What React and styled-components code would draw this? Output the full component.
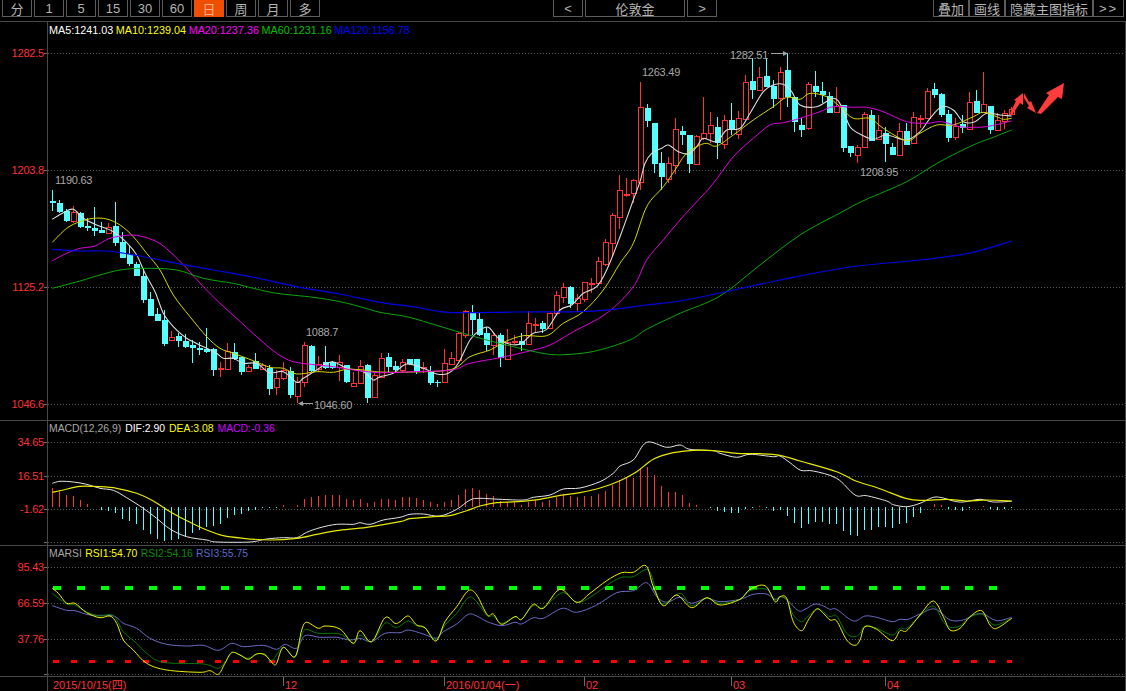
import React from 'react';
import styled, { createGlobalStyle } from 'styled-components';

const GlobalStyle = createGlobalStyle`
  html, body {
    margin: 0;
    padding: 0;
    background: #000;
    overflow: hidden;
  }
`;

const colors = {
  up: '#ff3232',
  down: '#54ffff',
  grid: '#5a5a5a',
  rule: '#484848',
  label: '#a8a8a8',
};

// [isUp, bodyTop, bodyBottom, high, low], one row per trading day
const candles = [
  [0,201,203,190,211],[0,203,212,200,213],[0,211,221,209,222],[1,212,221,206,223],[0,213,227,212,228],
  [0,226,228,218,231],[0,228,231,207,236],[0,230,233,222,233],[1,227,233,223,234],[0,226,243,202,246],
  [0,242,258,232,258],[0,254,264,245,266],[0,264,276,262,276],[0,276,300,268,303],[0,299,316,292,316],
  [0,314,321,308,321],[0,320,344,310,346],[1,337,340,331,341],[0,336,341,333,347],[0,341,347,334,348],
  [0,345,348,340,363],[0,348,350,342,355],[0,349,352,328,353],[0,349,370,348,376],[1,368,369,362,377],
  [1,351,369,343,370],[0,352,359,343,360],[0,357,372,357,375],[1,367,371,365,372],[0,361,369,353,369],
  [1,365,369,363,370],[0,368,389,365,395],[1,378,387,370,395],[1,370,378,362,380],[0,371,395,367,398],
  [1,382,396,377,403],[1,345,382,342,387],[0,346,371,345,372],[1,364,369,356,372],[0,362,368,346,369],
  [0,362,368,361,369],[1,362,367,355,381],[0,365,382,365,383],[1,383,386,372,386],[1,366,383,360,384],
  [0,365,398,364,403],[1,375,397,373,398],[1,358,377,353,378],[0,357,367,353,372],[0,366,370,361,373],
  [1,362,370,359,372],[0,359,364,359,365],[0,359,372,359,374],[1,367,368,362,373],[0,371,383,366,385],
  [0,382,383,380,387],[1,363,382,349,382],[1,358,364,352,364],[1,333,360,332,361],[1,311,335,310,338],
  [0,312,320,305,335],[0,319,335,312,336],[0,333,345,327,351],[1,335,345,333,355],[0,335,358,333,367],
  [1,342,359,329,360],[1,341,342,335,344],[0,341,345,333,351],[1,323,344,311,345],[1,324,325,318,333],
  [0,323,329,321,333],[1,313,328,313,329],[1,295,313,291,314],[1,287,297,283,303],[0,287,304,286,308],
  [1,298,303,294,312],[1,282,299,282,302],[1,283,284,278,293],[1,261,283,257,285],[1,242,264,239,266],
  [1,215,243,213,257],[1,190,217,175,229],[1,194,195,178,197],[1,180,193,179,203],[1,107,182,82,190],
  [0,108,121,104,127],[0,123,164,123,173],[0,163,177,152,190],[1,163,179,157,183],[1,129,165,118,174],
  [0,131,135,126,145],[0,135,164,135,173],[1,136,164,135,165],[1,133,138,97,140],[1,125,133,112,143],
  [0,127,143,117,159],[1,120,144,115,149],[0,120,130,103,135],[1,118,134,111,139],[1,82,119,75,120],
  [0,81,90,58,99],[1,77,90,67,91],[0,76,87,58,87],[0,86,99,80,108],[1,72,98,67,120],
  [0,70,97,53,107],[0,97,122,97,132],[0,125,130,118,137],[1,84,128,82,130],[0,86,92,71,97],
  [0,91,95,82,103],[0,96,113,92,113],[1,106,112,87,112],[0,105,148,105,152],[0,146,153,146,157],
  [1,147,155,145,163],[1,114,147,112,147],[0,115,141,110,141],[1,130,139,115,140],[0,133,144,127,162],
  [0,147,155,143,155],[1,131,155,123,155],[0,131,145,123,145],[1,117,143,112,143],[1,118,119,115,128],
  [1,91,118,88,119],[0,89,95,83,98],[0,94,115,93,117],[0,114,138,110,142],[1,126,137,118,140],
  [0,124,128,115,133],[1,102,129,92,130],[0,101,113,90,113],[1,104,112,72,113],[0,106,130,106,134],
  [1,120,130,113,131],[1,113,121,110,129],[1,109,114,107,114],
];

// MACD histogram height per day, positive draws up in red
const macdBars = [
  19,16,12.5,11,7,3,0,-3,-3.5,-6,-12,-14,-17,-23,-27,-32,-34,-33,-32,-30,
  -26,-23,-20,-19,-17,-11,-8,-7,-4,-2.5,-1,-1,-1,2,0,2,8,10,11,12,
  12,12,8,7,8,4,5,8,8,7,10,10,9,7,5,3,5,7,12,18,
  19,17,13,11,6,5,5,2,5,7,5,7,10,13,11,10,11,11,13,16,
  22,27,30,29,39,40,32,21,15,15,12,4,2,0,-1,-4,-4.5,-6,-6,-2,
  -1,1,-1,-4,-3,-9,-15.5,-21,-17,-15,-15,-17,-17,-24,-28,-29,-23,-23,-20,-20,
  -21,-17,-16,-10,-6,0,3.5,2.5,-2,-3,-4,-1,0,1,-2,-3,-2,-1,
];

// the curve points were read off 3x crops, so each run keeps its crop origin
const crop = (ox, oy, flat) => {
  const pts = [];
  for (let i = 0; i < flat.length; i += 2) {
    pts.push([ox + flat[i] / 3, oy + flat[i + 1] / 3]);
  }
  return pts;
};

const smooth = (pts) => {
  let d = `M${pts[0][0].toFixed(1)} ${pts[0][1].toFixed(1)}`;
  for (let i = 0; i < pts.length - 1; i++) {
    const p0 = pts[i - 1] || pts[i];
    const p1 = pts[i];
    const p2 = pts[i + 1];
    const p3 = pts[i + 2] || p2;
    const c1x = p1[0] + (p2[0] - p0[0]) / 6;
    const c1y = p1[1] + (p2[1] - p0[1]) / 6;
    const c2x = p2[0] - (p3[0] - p1[0]) / 6;
    const c2y = p2[1] - (p3[1] - p1[1]) / 6;
    d += `C${c1x.toFixed(1)} ${c1y.toFixed(1)} ${c2x.toFixed(1)} ${c2y.toFixed(1)} ${p2[0].toFixed(1)} ${p2[1].toFixed(1)}`;
  }
  return d;
};

const ma5 = [
  ...crop(0, 170, [157,148,190,128,220,118,250,145,290,165,340,185,380,218,410,255,435,310,465,365,490,430,520,470,560,505,620,535,650,550,670,565,700,565,730,580,770,580,808,608,850,605,890,637,910,625,950,600,995,575,1040,595,1090,605,1120,630]),
  ...crop(380, 170, [0,620,40,610,80,582,130,595,170,612,205,610,235,580,270,510,300,480,325,472,350,500,380,520,420,522,460,490,500,478,540,420,575,405,610,370,650,350,680,300,720,200,760,90]),
  ...crop(620, 50, [60,395,75,340,95,310,125,295,145,285,175,305,205,312,230,290,250,265,290,275,320,240,360,235,390,190,430,125,460,105,490,103,515,125,540,165,590,170,640,145,665,170,690,230,725,255,760,268,800,255,860,270,900,245,930,205,965,170,1000,180,1030,215,1065,215,1100,190,1140,195,1175,198]),
];
const ma10 = [
  ...crop(0, 170, [157,217,200,175,240,155,280,145,320,147,360,165,400,200,440,250,480,300,520,375,570,440,620,500,660,535,700,550,760,572,810,592,850,595,890,612,950,605,1000,607,1040,598,1090,600]),
  ...crop(380, 170, [0,606,100,606,215,598,270,560,330,540,375,515,430,497,500,497,550,460,610,425,670,360,720,280,760,220,800,110]),
  ...crop(620, 50, [130,410,165,360,195,315,230,290,260,280,290,288,340,255,400,210,460,170,500,142,540,148,570,130,620,140,660,170,700,205,750,205,790,235,860,272,900,250,950,225,1000,225,1060,200,1090,187,1130,200,1150,208,1175,205]),
];
const ma20 = [
  ...crop(0, 170, [157,272,200,250,240,235,285,228,330,205,380,196,420,198,470,215,510,245,560,295,610,350,660,400,710,445,770,500,830,550,880,575,950,585,1000,590,1060,600]),
  ...crop(380, 170, [0,608,100,605,215,600,270,580,360,563,440,545,510,525,580,485,680,430,760,350,800,270,850,210,900,150]),
  ...crop(620, 50, [235,450,280,400,340,320,400,265,450,225,490,218,540,205,600,185,640,170,700,172,740,172,790,185,860,215,920,220,965,215,1020,230,1070,232,1110,228,1175,213]),
];
const ma60 = [
  ...crop(0, 170, [157,355,240,333,300,315,360,300,430,295,530,300,610,325,700,340,760,355,830,370,940,382,1020,395,1080,410]),
  ...crop(380, 170, [0,427,80,440,150,460,250,490,320,510,400,530,500,552,570,553,650,542,750,510,800,478,900,430]),
  [720,296],[760,265],[800,235],[840,213],
  ...crop(620, 50, [735,450,860,395,960,335,1060,285,1120,262,1175,240]),
];
const ma120 = [
  ...crop(0, 170, [157,238,240,243,320,243,420,258,530,280,640,300,760,322,900,352,1020,372]),
  ...crop(380, 170, [0,397,100,410,180,425,250,428,400,426,600,425,700,418,800,405,900,393]),
  [720,293],[780,280],[850,267],[920,260],[970,253],[1012,241],
];

const dif = [
  ...crop(0, 415, [157,205,180,199,220,201,260,208,300,220,340,226,380,248,430,280,470,310,510,342,560,365,620,375,650,381,750,381,800,372,850,368,890,368,920,352,960,338,1010,328,1060,328,1080,323,1110,328,1150,315]),
  ...crop(400, 420, [0,292,30,283,70,282,120,288,170,268,210,240,240,235,300,238,370,240,400,232,450,225,490,207,540,204,600,185,640,160,660,138,700,120,740,67,800,82,840,75,870,88,940,92,960,100,1010,112,1050,103,1120,110]),
  ...crop(780, 420, [0,108,30,128,62,151,100,153,170,175,225,225,260,227,320,243,340,254,380,260,420,250,460,232,490,234,520,243,550,246,600,238,640,246,695,244]),
];
const dea = [
  ...crop(0, 415, [157,232,190,225,240,214,300,215,350,220,410,235,460,258,510,290,570,322,620,345,670,362,730,370,810,375,890,370,950,358,1010,347,1100,337]),
  ...crop(400, 420, [0,305,30,296,100,290,150,287,200,272,240,258,290,248,350,245,420,238,480,226,540,218,600,204,660,182,710,155,760,118,820,98,880,91,940,92,1010,100,1080,101]),
  ...crop(780, 420, [0,106,60,123,170,155,225,182,300,206,380,236,430,241,500,238,560,243,620,240,695,243]),
];

const rsi1 = [
  ...crop(0, 540, [157,145,175,160,200,190,225,190,260,218,300,233,330,228,350,250,370,300,400,330,440,370,500,390,600,397,630,392,655,403,675,370,695,338,720,345,745,358,770,342,795,345,820,372,830,370,850,322,885,350,905,270,920,247,955,265,975,258,1020,267,1060,310,1080,272,1115,305,1155,233,1185,250]),
  ...crop(400, 540, [0,245,25,228,50,255,75,263,108,303,135,245,170,200,205,152,230,165,262,225,280,222,305,253,345,230,365,238,400,193,430,205,480,148,530,187,570,160,620,122,665,98,700,97,738,77,760,140,790,197,830,165,875,203,920,173,960,195,1020,178,1050,148,1095,137,1125,185]),
  ...crop(780, 540, [0,170,20,175,40,245,65,272,85,240,110,207,130,220,150,240,170,243,200,300,225,316,240,300,255,260,290,268,337,302,360,272,380,272,420,225,460,183,490,230,510,270,540,265,570,230,605,212,630,255,650,265,695,235]),
];
const rsi2 = [
  ...crop(0, 540, [157,160,200,192,225,195,260,216,300,228,340,226,370,275,410,310,440,340,490,367,610,372,655,385,675,365,695,337,720,345,745,355,770,342,795,342,815,362,850,322,885,352,905,285,920,268,955,280,1020,282,1060,310,1080,285,1115,305,1155,250,1185,262]),
  ...crop(400, 540, [0,258,25,243,50,257,75,265,108,298,135,255,170,220,205,173,230,185,262,228,280,228,305,250,345,230,365,237,400,197,430,203,487,158,530,187,570,172,630,130,665,112,700,110,745,90,770,160,790,192,840,160,875,197,920,175,960,190,1020,178,1050,152,1100,148,1125,180]),
  ...crop(780, 540, [0,170,20,180,40,225,65,245,85,228,110,207,130,215,150,230,170,228,200,280,225,290,240,280,255,258,290,265,337,285,360,265,380,265,420,228,460,198,490,245,510,262,540,258,570,232,605,222,630,247,650,255,695,235]),
];
const rsi3 = [
  ...crop(0, 540, [157,197,200,211,225,212,270,225,340,228,370,250,410,265,450,295,500,313,560,318,610,316,655,331,695,310,730,320,790,316,830,328,855,313,890,325,915,287,960,292,1010,292,1050,300,1080,295,1115,305,1155,280]),
  ...crop(400, 540, [0,278,25,270,70,282,108,295,130,275,170,252,205,223,230,228,262,245,305,257,345,247,365,252,400,233,430,235,487,205,530,217,590,195,650,158,700,152,740,128,770,170,800,187,840,172,875,190,920,175,960,185,1020,178,1060,163,1100,162,1125,178]),
  ...crop(780, 540, [0,170,20,178,55,212,75,208,105,192,130,198,150,208,170,208,220,243,255,228,290,232,337,245,360,238,385,238,420,222,465,207,510,240,550,240,580,225,610,222,650,242,695,232]),
];

const Page = styled.div`
  position: relative;
  width: 1126px;
  height: 691px;
  background: #000;
  overflow: hidden;
  font-family: "Liberation Sans", "Noto Sans CJK SC", sans-serif;
`;

const Toolbar = styled.div`
  display: flex;
  height: 21px;
  padding-left: 2px;
  border-bottom: 1px solid ${colors.rule};
  box-sizing: content-box;
`;

const ButtonGroup = styled.div`
  display: flex;
  gap: ${(p) => p.$gap || 0}px;
  margin-left: ${(p) => p.$offset || 0}px;
`;

const ToolButton = styled.div`
  width: ${(p) => p.$width || 30}px;
  height: 18px;
  margin-top: -1px;
  box-sizing: border-box;
  border: 1px solid #5c5c5c;
  display: flex;
  align-items: center;
  justify-content: center;
  font-size: 13px;
  color: ${(p) => (p.$active ? '#f0b090' : '#b4b4b4')};
  background: ${(p) => (p.$active ? '#f04e00' : '#000')};
  border-color: ${(p) => (p.$active ? '#f04e00' : '#5c5c5c')};
  letter-spacing: ${(p) => p.$spacing || 0}px;
  white-space: nowrap;
`;

const Panel = styled.div`
  position: absolute;
  left: 0;
  top: ${(p) => p.$top}px;
  width: 1126px;
  height: ${(p) => p.$height}px;
  border-bottom: 1px solid ${colors.rule};
`;

const PanelChart = styled.svg`
  position: absolute;
  left: 0;
  top: 0;
  display: block;
`;

const AxisLine = styled.div`
  position: absolute;
  top: 21px;
  bottom: 0;
  left: ${(p) => p.$left}px;
  width: 1px;
  background: ${colors.rule};
`;

const AxisLabel = styled.div`
  position: absolute;
  left: 0;
  width: 44px;
  top: ${(p) => p.$y - 7}px;
  height: 14px;
  line-height: 14px;
  text-align: right;
  font-size: 11px;
  letter-spacing: -0.2px;
  color: ${colors.up};
`;

const Legend = styled.div`
  position: absolute;
  left: 49px;
  top: ${(p) => p.$y - 7}px;
  height: 14px;
  line-height: 14px;
  display: flex;
  gap: ${(p) => p.$gap}px;
  font-size: ${(p) => p.$size}px;
  white-space: nowrap;
`;

const LegendItem = styled.span`
  color: ${(p) => p.$color};
`;

const PriceNote = styled.div`
  position: absolute;
  left: ${(p) => p.$x}px;
  top: ${(p) => p.$y - 7}px;
  height: 14px;
  line-height: 14px;
  font-size: 11px;
  letter-spacing: -0.25px;
  color: ${colors.label};
`;

const TimeAxis = styled.div`
  position: absolute;
  left: 0;
  top: 677px;
  width: 1126px;
  height: 14px;
`;

const TimeLabel = styled.div`
  position: absolute;
  left: ${(p) => p.$x}px;
  top: 0;
  padding-left: 1px;
  border-left: 1px solid ${(p) => (p.$tick ? '#6a6a6a' : 'transparent')};
  height: 9px;
  line-height: 17px;
  font-size: 11px;
  color: ${colors.up};
  white-space: nowrap;
`;

const Grid = ({ ys }) => (
  <g shapeRendering="crispEdges">
    {ys.map((y) => (
      <g key={y}>
        <line x1="44" x2="48" y1={y + 0.5} y2={y + 0.5} stroke="#707070" />
        <line x1="48" x2="1125" y1={y + 0.5} y2={y + 0.5} stroke={colors.grid} strokeDasharray="1 2" />
      </g>
    ))}
  </g>
);

const Candles = () => (
  <g shapeRendering="crispEdges">
    {candles.map(([isUp, top, bottom, high, low], i) => {
      const x = 52 + i * 7;
      const color = isUp ? colors.up : colors.down;
      return (
        <g key={i}>
          <rect x={x} y={high} width="1" height={low - high} fill={color} />
          {isUp ? (
            <rect x={x - 1.5} y={top + 0.5} width="5" height={Math.max(bottom - top, 1)} fill="#000" stroke={color} />
          ) : (
            <rect x={x - 2} y={top} width="6" height={Math.max(bottom - top, 1)} fill={color} />
          )}
        </g>
      );
    })}
  </g>
);

const Curve = ({ pts, color, width = 1 }) => (
  <path d={smooth(pts)} fill="none" stroke={color} strokeWidth={width} strokeLinejoin="round" />
);

const PriceMarks = () => (
  <g>
    <g stroke="#a0a0a0" fill="#a0a0a0">
      <line x1="771" x2="784" y1="53.5" y2="53.5" />
      <polygon points="788,53.5 783,51 783,56" stroke="none" />
      <line x1="302" x2="313" y1="403.5" y2="403.5" />
      <polygon points="298,403.5 303,401 303,406" stroke="none" />
    </g>
    <g fill="#ff3b3b">
      <polygon points="1010,113 1016,101 1014,100 1023,93 1023,105 1020,103 1012,115" />
      <polygon points="1024,93 1029,102 1031,101 1036,113 1027,108 1029,106 1024,98" />
      <polygon points="1037,113 1049,95 1046,93 1064,83 1062,99 1058,97 1041,114" />
    </g>
  </g>
);

const PricePanel = () => (
  <Panel $top={22} $height={398}>
    <PanelChart width="1126" height="398" viewBox="0 22 1126 398">
      <Grid ys={[53, 170, 287, 404]} />
      <Candles />
      <Curve pts={ma5} color="#dcdcdc" width={1.1} />
      <Curve pts={ma10} color="#d8d800" />
      <Curve pts={ma20} color="#e000e0" />
      <Curve pts={ma60} color="#08a808" />
      <Curve pts={ma120} color="#0000e6" width={1.2} />
      <PriceMarks />
    </PanelChart>
    <AxisLabel $y={31}>1282.5</AxisLabel>
    <AxisLabel $y={148}>1203.8</AxisLabel>
    <AxisLabel $y={265}>1125.2</AxisLabel>
    <AxisLabel $y={382}>1046.6</AxisLabel>
    <Legend $y={8} $gap={2.6} $size={10.8}>
      <LegendItem $color="#fff">MA5:1241.03</LegendItem>
      <LegendItem $color="#ffff00">MA10:1239.04</LegendItem>
      <LegendItem $color="#ff00ff">MA20:1237.36</LegendItem>
      <LegendItem $color="#00c000">MA60:1231.16</LegendItem>
      <LegendItem $color="#0000ff">MA120:1156.78</LegendItem>
    </Legend>
    <PriceNote $x={55} $y={158}>1190.63</PriceNote>
    <PriceNote $x={642} $y={50}>1263.49</PriceNote>
    <PriceNote $x={730} $y={33}>1282.51</PriceNote>
    <PriceNote $x={306} $y={310}>1088.7</PriceNote>
    <PriceNote $x={314} $y={383}>1046.60</PriceNote>
    <PriceNote $x={860} $y={150}>1208.95</PriceNote>
  </Panel>
);

const MacdPanel = () => (
  <Panel $top={421} $height={124}>
    <PanelChart width="1126" height="124" viewBox="0 421 1126 124">
      <Grid ys={[442, 476, 509, 542]} />
      <g shapeRendering="crispEdges">
        {macdBars.map((h, i) =>
          h === 0 ? null : (
            <rect
              key={i}
              x={52 + i * 7}
              y={h > 0 ? 507 - h : 507}
              width="1"
              height={Math.abs(h)}
              fill={h > 0 ? colors.up : colors.down}
            />
          ),
        )}
      </g>
      <Curve pts={dif} color="#e4e4e4" />
      <Curve pts={dea} color="#e8e800" width={1.2} />
    </PanelChart>
    <AxisLabel $y={21}>34.65</AxisLabel>
    <AxisLabel $y={55}>16.51</AxisLabel>
    <AxisLabel $y={88}>-1.62</AxisLabel>
    <Legend $y={8} $gap={4} $size={10.4}>
      <LegendItem $color={colors.label}>MACD(12,26,9)</LegendItem>
      <LegendItem $color="#fff">DIF:2.90</LegendItem>
      <LegendItem $color="#ffff00">DEA:3.08</LegendItem>
      <LegendItem $color="#d000ff">MACD:-0.36</LegendItem>
    </Legend>
  </Panel>
);

const RsiPanel = () => (
  <Panel $top={546} $height={130}>
    <PanelChart width="1126" height="130" viewBox="0 546 1126 130">
      <Grid ys={[567, 603, 639, 674]} />
      <line x1="52.5" x2="997" y1="587.5" y2="587.5" stroke="#00ff00" strokeWidth="4" strokeDasharray="8 16" shapeRendering="crispEdges" />
      <line x1="52.5" x2="1012" y1="661.5" y2="661.5" stroke="#ff0000" strokeWidth="3" strokeDasharray="6 12" shapeRendering="crispEdges" />
      <Curve pts={rsi3} color="#6a6ac8" />
      <Curve pts={rsi2} color="#0a780a" />
      <Curve pts={rsi1} color="#f0f000" />
    </PanelChart>
    <AxisLabel $y={21}>95.43</AxisLabel>
    <AxisLabel $y={57}>66.59</AxisLabel>
    <AxisLabel $y={93}>37.76</AxisLabel>
    <Legend $y={8} $gap={3.4} $size={10.4}>
      <LegendItem $color={colors.label}>MARSI</LegendItem>
      <LegendItem $color="#ffff00">RSI1:54.70</LegendItem>
      <LegendItem $color="#0a8a0a">RSI2:54.16</LegendItem>
      <LegendItem $color="#5a6ac8">RSI3:55.75</LegendItem>
    </Legend>
  </Panel>
);

const periods = ['分', '1', '5', '15', '30', '60', '日', '周', '月', '多'];

export default function App() {
  return (
    <Page>
      <GlobalStyle />
      <Toolbar>
        <ButtonGroup $gap={2}>
          {periods.map((p) => (
            <ToolButton key={p} $active={p === '日'}>{p}</ToolButton>
          ))}
        </ButtonGroup>
        <ButtonGroup $gap={2} $offset={233}>
          <ToolButton>&lt;</ToolButton>
          <ToolButton $width={100}>伦敦金</ToolButton>
          <ToolButton>&gt;</ToolButton>
        </ButtonGroup>
        <ButtonGroup $offset={216}>
          <ToolButton $width={36}>叠加</ToolButton>
          <ToolButton $width={36}>画线</ToolButton>
          <ToolButton $width={88}>隐藏主图指标</ToolButton>
          <ToolButton $width={31} $spacing={2}>&gt;&gt;</ToolButton>
        </ButtonGroup>
      </Toolbar>
      <PricePanel />
      <MacdPanel />
      <RsiPanel />
      <TimeAxis>
        <TimeLabel $x={51}>2015/10/15(四)</TimeLabel>
        <TimeLabel $x={283} $tick>12</TimeLabel>
        <TimeLabel $x={444} $tick>2016/01/04(一)</TimeLabel>
        <TimeLabel $x={584} $tick>02</TimeLabel>
        <TimeLabel $x={731} $tick>03</TimeLabel>
        <TimeLabel $x={885} $tick>04</TimeLabel>
      </TimeAxis>
      <AxisLine $left={47} />
      <AxisLine $left={1125} />
    </Page>
  );
}
